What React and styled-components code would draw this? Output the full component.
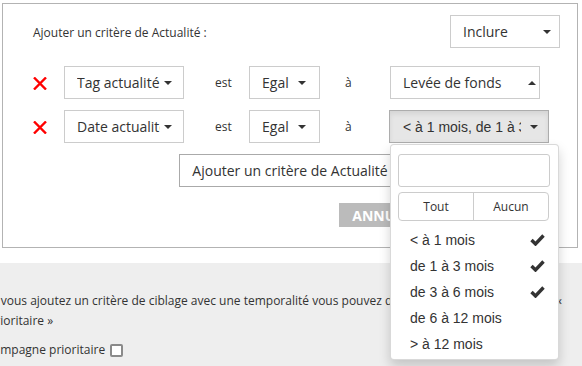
import styled, { createGlobalStyle } from 'styled-components'

const Global = createGlobalStyle`
	html, body {
		margin: 0;
		padding: 0;
		width: 582px;
		height: 366px;
		overflow: hidden;
		background: #fff;
		font-family: 'Open Sans', sans-serif;
		color: #333;
	}
	* { box-sizing: border-box; }
`

const periods = [
	{ label: '< à 1 mois', checked: true },
	{ label: 'de 1 à 3 mois', checked: true },
	{ label: 'de 3 à 6 mois', checked: true },
	{ label: 'de 6 à 12 mois', checked: false },
	{ label: '> à 12 mois', checked: false },
]

function Cross() {
	return (
		<svg width="14" height="13" viewBox="0 0 14 13">
			<path d="M1 0.5 L13 12.5 M13 0.5 L1 12.5" stroke="#f00" strokeWidth="2.4" fill="none" />
		</svg>
	)
}

function Check() {
	return (
		<svg width="15" height="12" viewBox="0 0 15 12">
			<polyline points="1.5,6 5.5,10 13.5,1.5" stroke="#333" strokeWidth="3.4" fill="none" />
		</svg>
	)
}

function App() {
	return (
		<>
			<Global />
			<Panel>
				<Header>
					<Title>Ajouter un critère de Actualité :</Title>
					<Select $w={110} $right={8}>
						<SelectText>Inclure</SelectText>
						<Caret />
					</Select>
				</Header>
				<Row $top={18}>
					<Remove><Cross /></Remove>
					<Select $w={120}>
						<SelectText>Tag actualité</SelectText>
						<Caret />
					</Select>
					<Word $w={65} $pad={31}>est</Word>
					<Select $w={71} $right={13}>
						<SelectText>Egal</SelectText>
						<Caret />
					</Select>
					<Word $w={70} $pad={25}>à</Word>
					<Select $w={150} $right={3}>
						<SelectText>Levée de fonds</SelectText>
						<Caret $up />
					</Select>
				</Row>
				<Row $top={11}>
					<Remove><Cross /></Remove>
					<Select $w={120}>
						<SelectText>Date actualité</SelectText>
						<Caret />
					</Select>
					<Word $w={65} $pad={31}>est</Word>
					<Select $w={71} $right={13}>
						<SelectText>Egal</SelectText>
						<Caret />
					</Select>
					<Word $w={69} $pad={25}>à</Word>
					<Multi>
						<MultiButton>
							<MultiText>&lt; à 1 mois, de 1 à 3 mois, de 3 à 6 mois</MultiText>
							<Caret />
						</MultiButton>
						<Menu>
							<Search />
							<Toggle>
								<ToggleBtn>Tout</ToggleBtn>
								<ToggleBtn>Aucun</ToggleBtn>
							</Toggle>
							<Options>
								{periods.map(p => (
									<Option key={p.label}>
										<span>{p.label}</span>
										{p.checked && <Check />}
									</Option>
								))}
							</Options>
						</Menu>
					</Multi>
				</Row>
				<AddRow>
					<AddButton>Ajouter un critère de Actualité</AddButton>
				</AddRow>
				<Actions>
					<ActionButton>ANNULER</ActionButton>
					<ActionButton>VALIDER</ActionButton>
				</Actions>
			</Panel>
			<Footer>
				<FooterLine $shift={12}>
					Si vous ajoutez un critère de ciblage avec une temporalité vous pouvez déclarer sa campagne comme «
				</FooterLine>
				<FooterLine $shift={12}>prioritaire »</FooterLine>
				<CheckLine $shift={14}>
					Campagne prioritaire <Box />
				</CheckLine>
			</Footer>
		</>
	)
}
export default App

const Panel = styled.div`
	margin: 3px 4px 0 2px;
	height: 245px;
	border: 1px solid #b3b3b3;
	padding: 11px 17px 0 30px;
`
const Header = styled.div`
	display: flex;
	justify-content: space-between;
	align-items: center;
	height: 33px;
`
const Title = styled.div`
	font-size: 12px;
	margin-top: 2px;
`
const Select = styled.div`
	display: flex;
	align-items: center;
	justify-content: space-between;
	width: ${p => p.$w}px;
	height: 33px;
	padding: 0 ${p => p.$right || 11}px 0 12px;
	border: 1px solid #ccc;
	background: #fff;
	font-size: 14px;
	flex-shrink: 0;
`
const SelectText = styled.span`
	flex: 1;
	overflow: hidden;
	white-space: nowrap;
	margin-right: 4px;
`
const Caret = styled.span`
	width: 0;
	height: 0;
	border-left: 4px solid transparent;
	border-right: 4px solid transparent;
	${p => (p.$up ? 'border-bottom: 4px solid #333;' : 'border-top: 4px solid #333;')}
	flex-shrink: 0;
`
const Row = styled.div`
	display: flex;
	align-items: center;
	margin-top: ${p => p.$top}px;
	height: 33px;
`
const Remove = styled.div`
	width: 31px;
	display: flex;
	align-items: center;
	padding-top: 1px;
`
const Word = styled.div`
	width: ${p => p.$w}px;
	padding-left: ${p => p.$pad}px;
	font-size: 12px;
	flex-shrink: 0;
`
const Multi = styled.div`
	position: relative;
`
const MultiButton = styled.div`
	display: flex;
	align-items: center;
	width: 160px;
	height: 33px;
	padding: 0 8px 0 13px;
	background: #e6e6e6;
	border: 1px solid #adadad;
	box-shadow: inset 0 3px 5px rgba(0, 0, 0, 0.08);
	font-family: 'Liberation Sans', Arial, sans-serif;
	font-size: 14px;
`
const MultiText = styled.span`
	width: 118px;
	overflow: hidden;
	white-space: nowrap;
	margin-right: 9px;
`
const Menu = styled.div`
	position: absolute;
	top: calc(100% + 1px);
	left: 1px;
	width: 169px;
	height: 216px;
	background: #fff;
	border: 1px solid rgba(0, 0, 0, 0.15);
	border-radius: 4px;
	box-shadow: 0 6px 12px rgba(0, 0, 0, 0.175);
	padding: 9px 0 0 0;
	z-index: 2;
`
const Search = styled.div`
	margin: 0 8px 0 7px;
	height: 33px;
	border: 1px solid #ccc;
	border-radius: 3px;
`
const Toggle = styled.div`
	display: flex;
	margin: 5px 9px 0 7px;
	height: 29px;
	border: 1px solid #ccc;
	border-radius: 4px;
`
const ToggleBtn = styled.div`
	flex: 1;
	display: flex;
	align-items: center;
	justify-content: center;
	font-size: 12px;
	& + & {
		border-left: 1px solid #ccc;
	}
`
const Options = styled.div`
	margin-top: 6px;
`
const Option = styled.div`
	display: flex;
	align-items: center;
	justify-content: space-between;
	height: 26px;
	padding: 0 13px 0 19px;
	font-family: 'Liberation Sans', Arial, sans-serif;
	font-size: 14px;
	color: #333;
`
const AddRow = styled.div`
	display: flex;
	justify-content: center;
	margin: 11px 0 0 -13px;
`
const AddButton = styled.div`
	height: 33px;
	display: flex;
	align-items: center;
	padding: 0 12px;
	border: 1px solid #aaa;
	font-size: 14px;
	white-space: nowrap;
`
const Actions = styled.div`
	display: flex;
	justify-content: flex-end;
	gap: 6px;
	margin: 16px 36px 0 0;
`
const ActionButton = styled.div`
	height: 24px;
	display: flex;
	align-items: center;
	padding: 0 13px;
	background: #bbb;
	color: #fff;
	font-weight: 700;
	font-size: 14px;
`
const Footer = styled.div`
	margin-top: 15px;
	height: 110px;
	background: #eee;
	padding-top: 28px;
	font-size: 12px;
	line-height: 20px;
`
const FooterLine = styled.div`
	margin-left: -${p => p.$shift}px;
	white-space: nowrap;
`
const CheckLine = styled.div`
	margin: 9px 0 0 -${p => p.$shift}px;
	display: flex;
	align-items: center;
	gap: 5px;
	white-space: nowrap;
`
const Box = styled.span`
	width: 13px;
	height: 13px;
	border: 2px solid #8a8a8a;
	border-radius: 2px;
	background: #fff;
`
